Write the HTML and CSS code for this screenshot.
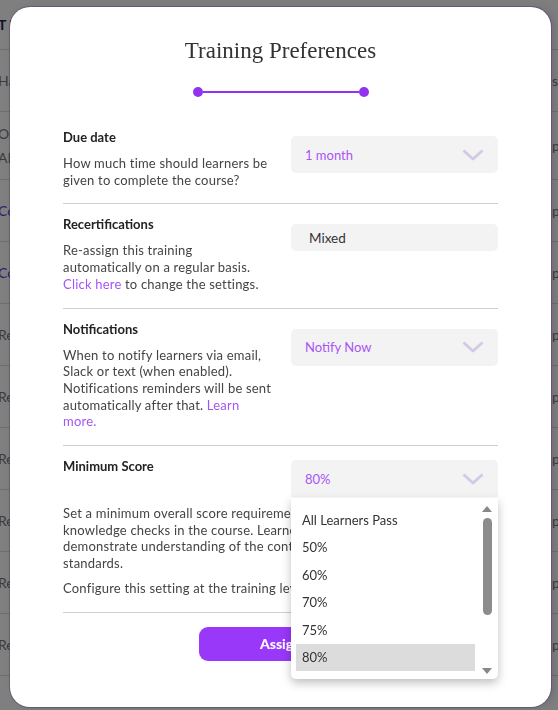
FILE: index.html
```html
<!DOCTYPE html>
<html lang="en">
<head>
    <meta charset="UTF-8">
    <meta name="viewport" content="width=device-width, initial-scale=1.0">
    <title>Training Preferences</title>
    <link rel="stylesheet" href="styles.css">
</head>
<body>

<div class="page">
    <div class="row row-head"><span class="cell-left">T F</span><span class="cell-right"></span></div>
    <div class="row"><span class="cell-left">Harassment</span><span class="cell-right">s</span></div>
    <div class="row row-tall"><span class="cell-left">Onboarding<br>AI basics</span><span class="cell-right">p</span></div>
    <div class="row"><span class="cell-left link">Compliance</span><span class="cell-right">p</span></div>
    <div class="row"><span class="cell-left link">Conduct</span><span class="cell-right">p</span></div>
    <div class="row"><span class="cell-left">Remote work</span><span class="cell-right">p</span></div>
    <div class="row"><span class="cell-left">Remote work</span><span class="cell-right">p</span></div>
    <div class="row"><span class="cell-left">Remote work</span><span class="cell-right">p</span></div>
    <div class="row"><span class="cell-left">Remote work</span><span class="cell-right">p</span></div>
    <div class="row"><span class="cell-left">Remote work</span><span class="cell-right">p</span></div>
    <div class="row"><span class="cell-left">Remote work</span><span class="cell-right">p</span></div>
</div>

<div class="overlay"></div>

<div class="modal">
    <h1 class="modal-title">Training Preferences</h1>
    <div class="stepper"><span class="dot"></span><span class="bar"></span><span class="dot"></span></div>

    <section class="pref">
        <div class="pref-top">
            <div class="pref-text">
                <h3>Due date</h3>
                <p>How much time should learners be given to complete the course?</p>
            </div>
            <div class="select">1 month<svg class="chev" viewBox="0 0 22 12"><path d="M1.5 1.5 L11 10 L20.5 1.5"/></svg></div>
        </div>
    </section>

    <section class="pref">
        <div class="pref-top">
            <div class="pref-text">
                <h3>Recertifications</h3>
                <p>Re-assign this training automatically on a regular basis. <a>Click here</a> to change the settings.</p>
            </div>
            <div class="select select-plain">Mixed</div>
        </div>
    </section>

    <section class="pref">
        <div class="pref-top">
            <div class="pref-text">
                <h3>Notifications</h3>
                <p>When to notify learners via email, Slack or text (when enabled). Notifications reminders will be sent automatically after that. <a>Learn more.</a></p>
            </div>
            <div class="select select-low">Notify Now<svg class="chev" viewBox="0 0 22 12"><path d="M1.5 1.5 L11 10 L20.5 1.5"/></svg></div>
        </div>
    </section>

    <section class="pref">
        <div class="pref-top">
            <div class="pref-text">
                <h3>Minimum Score</h3>
            </div>
            <div class="select select-high">80%<svg class="chev" viewBox="0 0 22 12"><path d="M1.5 1.5 L11 10 L20.5 1.5"/></svg>
                <div class="listbox">
                    <div class="options">
                        <div class="option">All Learners Pass</div>
                        <div class="option">50%</div>
                        <div class="option">60%</div>
                        <div class="option">70%</div>
                        <div class="option">75%</div>
                        <div class="option selected">80%</div>
                    </div>
                    <div class="scrollbar">
                        <span class="arrow up"></span>
                        <span class="thumb"></span>
                        <span class="arrow down"></span>
                    </div>
                </div>
            </div>
        </div>
        <p class="pref-wide">Set a minimum overall score requirement for the quizzes, tests and knowledge checks in the course. Learners will need to reach it to demonstrate understanding of the content and meet your company's standards.</p>
        <p class="pref-wide">Configure this setting at the training level.</p>
    </section>

    <div class="actions">
        <button class="btn">Assign</button>
    </div>
</div>

</body>
</html>
```

FILE: styles.css
```css
body {
    margin: 0;
    font-family: Lato, "Open Sans", sans-serif;
    background: #fff;
    overflow: hidden;
    height: 710px;
}
.page {
    width: 558px;
    height: 710px;
    overflow: hidden;
}
.row {
    display: grid;
    grid-template-columns: 551px 1fr;
    height: 61px;
    border-bottom: 1px solid #dcdcdc;
    align-items: center;
    font-size: 14px;
    color: #777;
    overflow: hidden;
}
.row-head {
    height: 49px;
    color: #1b2a55;
    font-weight: bold;
}
.row-tall {
    height: 67px;
    line-height: 24px;
}
.cell-left {
    margin-left: -2px;
    white-space: nowrap;
}
.cell-right {
    margin-left: 1px;
    white-space: nowrap;
}
.link {
    color: #5b3bd6;
}
.overlay {
    position: fixed;
    inset: 0;
    background: rgba(0, 0, 0, 0.5);
}

.modal {
    position: absolute;
    left: 10px;
    top: 7px;
    width: 541px;
    height: 700px;
    box-sizing: border-box;
    padding: 30px 53px 0;
    background: #fff;
    border-radius: 20px;
    box-shadow: 0 0 0 1px rgba(60, 40, 90, 0.35), 4px 0 8px rgba(40, 20, 80, 0.15);
}
.modal-title {
    margin: 0;
    text-align: center;
    font-family: "Liberation Serif", serif;
    font-weight: normal;
    font-size: 23px;
    line-height: 28px;
    color: #333;
}
.stepper {
    display: flex;
    align-items: center;
    width: 176px;
    margin: 22px auto 20px;
}
.dot {
    width: 10px;
    height: 10px;
    border-radius: 50%;
    background: #9333f0;
}
.bar {
    flex: 1;
    height: 2px;
    background: #9333f0;
}

.pref {
    padding: 12px 0 15px;
    border-bottom: 1px solid #cfcfcf;
}
.pref-top {
    display: flex;
    align-items: flex-start;
    justify-content: space-between;
}
.pref-text {
    flex: 0 0 210px;
}
.pref h3 {
    margin: 0 0 9px;
    font-size: 13px;
    line-height: 17px;
    font-weight: bold;
    color: #222;
}
.pref p {
    margin: 0;
    font-size: 13px;
    line-height: 16.7px;
    letter-spacing: 0.2px;
    color: #444;
}
.pref a {
    color: #a455f5;
}
.pref .pref-wide {
    margin-top: 8px;
}

.select {
    position: relative;
    width: 207px;
    height: 37px;
    box-sizing: border-box;
    margin-top: 7px;
    padding: 0 14px;
    display: flex;
    align-items: center;
    justify-content: space-between;
    background: #f3f3f3;
    border-radius: 5px;
    font-size: 13px;
    color: #a855f7;
}
.select-plain {
    height: 27px;
    margin-top: 8px;
    padding-left: 18px;
    color: #333;
    font-size: 13.5px;
}
.select-low {
    margin-top: 8px;
}
.select-high {
    margin-top: 2px;
    border-radius: 5px 5px 0 0;
}
.chev {
    width: 22px;
    height: 12px;
    fill: none;
    stroke: #d2cae6;
    stroke-width: 3;
    stroke-linejoin: round;
}

.listbox {
    position: absolute;
    left: 0;
    top: 38px;
    width: 207px;
    height: 181px;
    box-sizing: border-box;
    padding: 5px 4px 5px 5px;
    display: flex;
    background: #fff;
    border-radius: 0 0 5px 5px;
    box-shadow: 0 4px 10px rgba(0, 0, 0, 0.25);
    z-index: 2;
}
.options {
    flex: 1;
    padding-top: 4px;
}
.option {
    height: 27.4px;
    line-height: 27.4px;
    padding-left: 6px;
    font-size: 13px;
    color: #333;
}
.option.selected {
    background: #dcdcdc;
}
.scrollbar {
    width: 14px;
    margin-left: 5px;
    display: flex;
    flex-direction: column;
    align-items: center;
}
.arrow {
    width: 0;
    height: 0;
    border-left: 5px solid transparent;
    border-right: 5px solid transparent;
}
.arrow.up {
    margin-top: 3px;
    border-bottom: 6px solid #888;
}
.arrow.down {
    margin-top: auto;
    margin-bottom: 0;
    border-top: 6px solid #888;
}
.thumb {
    width: 9px;
    height: 97px;
    margin-top: 6px;
    background: #8c8c8c;
    border-radius: 5px;
}

.actions {
    display: flex;
    justify-content: center;
    padding-top: 14px;
}
.btn {
    width: 164px;
    height: 34px;
    border: none;
    border-radius: 9px;
    background: #9a38fa;
    color: #fff;
    font-family: Lato, sans-serif;
    font-weight: 900;
    font-size: 14px;
}
```
